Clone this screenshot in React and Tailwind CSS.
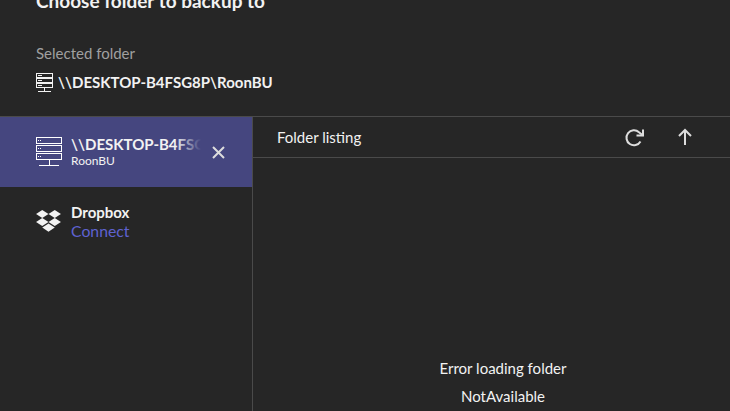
import React from 'react';

const ServerIcon = () => (
  <svg className="mr-[9px] h-[30px] w-[26px] shrink-0 text-white" viewBox="0 0 26 30" fill="none" stroke="currentColor" strokeWidth="1">
    <rect x="0.5" y="0.5" width="25" height="6" />
    <rect x="0.5" y="8.5" width="25" height="6" />
    <rect x="0.5" y="16.5" width="25" height="6" />
    <path d="M2 3.5h1M4 3.5h1M2 11.5h1M4 11.5h1M2 19.5h1M4 19.5h1" />
    <path d="M13.5 23v5M3 28.5h20" />
  </svg>
);

const SmallServerIcon = () => (
  <svg className="h-[19px] w-[17px] shrink-0 text-[#f2f2f2]" viewBox="0 0 17 19" fill="none" stroke="currentColor" strokeWidth="1">
    <rect x="0.5" y="0.5" width="16" height="4" />
    <rect x="0.5" y="5.5" width="16" height="4" />
    <rect x="0.5" y="10.5" width="16" height="4" />
    <path d="M2 2.5h4M2 7.5h4M2 12.5h4" />
    <path d="M8.5 15v3M2 18.5h13" />
  </svg>
);

const DropboxIcon = () => (
  <svg className="mr-[10px] h-[23px] w-[25px] shrink-0 text-[#f2f2f2]" viewBox="0 0 26 24" fill="currentColor">
    <path d="M6.5 0L13 4.2 6.5 8.4 0 4.2z" />
    <path d="M19.5 0L26 4.2 19.5 8.4 13 4.2z" />
    <path d="M0 12.6l6.5-4.2L13 12.6l-6.5 4.2z" />
    <path d="M19.5 8.4L26 12.6l-6.5 4.2L13 12.6z" />
    <path d="M6.5 18.2L13 14l6.5 4.2L13 22.6l-6.5-4.4z" />
  </svg>
);

export default function App() {
  return (
    <div className="h-[411px] w-[730px] overflow-hidden bg-[#262626] font-['Lato','Noto_Sans',sans-serif] text-white">
      {/* Header */}
      <div className="flex h-[116px] flex-col px-9">
        <h1 className="-mt-[10px] text-[19px] leading-[22px] font-bold text-[#f2f2f2]">Choose folder to backup to</h1>
        <p className="mt-[31px] text-[15px] leading-[20px] text-[#a0a0a0]">Selected folder</p>
        <div className="mt-[9px] flex items-center gap-[5px]">
          <SmallServerIcon />
          <span className="text-[15px] leading-[20px] font-bold text-[#f2f2f2]">\\DESKTOP-B4FSG8P\RoonBU</span>
        </div>
      </div>

      {/* Body */}
      <div className="flex h-[295px] border-t border-[#4a4a4a]">
        {/* Sidebar */}
        <div className="w-[253px] shrink-0 border-r border-[#4a4a4a]">
          <div className="flex h-[70px] items-center bg-[#45467f] pl-9 pr-[27px]">
            <ServerIcon />
            <div className="relative w-[130px] overflow-hidden">
              <div className="-mt-[1px] whitespace-nowrap text-[15px] leading-[18px] font-bold text-[#f2f2f2]">\\DESKTOP-B4FSG8P</div>
              <div className="mt-[1px] text-[12px] leading-[14px] text-[#f2f2f2]">RoonBU</div>
              <div className="absolute top-0 right-0 h-[18px] w-[26px] bg-gradient-to-r from-transparent to-[#45467f]" />
            </div>
            <svg className="ml-auto h-[13px] w-[13px] shrink-0 text-[#dddddd]" viewBox="0 0 13 13" stroke="currentColor" strokeWidth="2" fill="none">
              <path d="M1 1l11 11M12 1L1 12" />
            </svg>
          </div>
          <div className="flex items-center pt-[16px] pl-9">
            <DropboxIcon />
            <div>
              <div className="text-[15px] leading-[18px] font-bold text-[#f2f2f2]">Dropbox</div>
              <div className="text-[15.8px] leading-[19px] text-[#5f62d0]">Connect</div>
            </div>
          </div>
        </div>

        {/* Folder listing */}
        <div className="flex min-w-0 flex-1 flex-col">
          <div className="flex h-[41px] shrink-0 items-center border-b border-[#4a4a4a] pr-[37px] pl-6">
            <span className="text-[15px] text-[#f2f2f2]">Folder listing</span>
            <svg className="mr-[32px] ml-auto h-[20px] w-[20px] text-[#dddddd]" viewBox="0 0 20 20" fill="none" stroke="currentColor" strokeWidth="2">
              <path d="M15.500 14.500A7.500 7.500 0 1 1 14 5.200L18 8.500" />
              <path d="M18 2.500V8.500H11.500" />
            </svg>
            <svg className="h-[18px] w-[16px] text-[#dddddd]" viewBox="0 0 16 18" fill="none" stroke="currentColor" strokeWidth="2">
              <path d="M8 17V2M2 8l6-6 6 6" />
            </svg>
          </div>
          <div className="flex flex-1 flex-col items-center pt-[196px] pl-[23px] text-[15px] leading-[28px] text-[#f2f2f2]">
            <div>Error loading folder</div>
            <div>NotAvailable</div>
          </div>
        </div>
      </div>
    </div>
  );
}
